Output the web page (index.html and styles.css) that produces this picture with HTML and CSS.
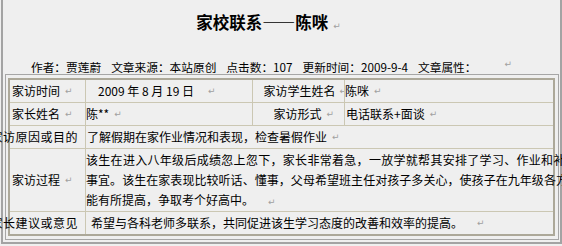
FILE: index.html
```html
<!DOCTYPE html>
<html lang="zh-CN">
<head>
  <meta charset="UTF-8" />
  <title>家校联系——陈咪</title>
  <link rel="stylesheet" href="styles.css">
</head>
<body>

  <div class="frame">
    <div class="head">
      <h1 class="title">家校联系——陈咪<span class="pm">↵</span></h1>
      <p class="meta">
        <span>作者：贾莲蔚</span>
        <span>文章来源：本站原创</span>
        <span>点击数：107</span>
        <span>更新时间：2009-9-4</span>
        <span>文章属性：</span>
        <span class="pm far">↵</span>
      </p>
    </div>

    <div class="box">
      <table class="visit">
        <tr>
          <td class="c1"><div class="cell pl2">家访时间<span class="pm">↵</span></div></td>
          <td class="c2"><div class="cell pl12">2009 年 8 月 19 日<span class="pm wide">↵</span></div></td>
          <td class="c3"><div class="cell end clip">家访学生姓名<span class="pm cut">↵</span></div></td>
          <td class="c4"><div class="cell">陈咪<span class="pm">↵</span></div></td>
        </tr>
        <tr>
          <td><div class="cell pl2">家长姓名<span class="pm">↵</span></div></td>
          <td><div class="cell">陈**<span class="pm">↵</span></div></td>
          <td><div class="cell end pr10">家访形式<span class="pm">↵</span></div></td>
          <td><div class="cell pl1">电话联系+面谈<span class="pm">↵</span></div></td>
        </tr>
        <tr>
          <td><div class="cell end pr7 spread">家访原因或目的</div></td>
          <td colspan="3"><div class="cell pl1">了解假期在家作业情况和表现，检查暑假作业<span class="pm">↵</span></div></td>
        </tr>
        <tr>
          <td><div class="cell tall pl2">家访过程<span class="pm">↵</span></div></td>
          <td colspan="3">
            <div class="cell tall para">
              <span class="line l1">该生在进入八年级后成绩忽上忽下，家长非常着急，一放学就帮其安排了学习、作业和补课</span>
              <span class="line l2">事宜。该生在家表现比较听话、懂事，父母希望班主任对孩子多关心，使孩子在九年级各方面</span>
              <span class="line">能有所提高，争取考个好高中。<span class="pm wide">↵</span></span>
            </div>
          </td>
        </tr>
        <tr>
          <td><div class="cell end pr7 spread">家长建议或意见</div></td>
          <td colspan="3"><div class="cell pl5">希望与各科老师多联系，共同促进该生学习态度的改善和效率的提高。<span class="pm wide">↵</span></div></td>
        </tr>
      </table>
    </div>
  </div>

</body>
</html>
```

FILE: styles.css
```css
* {
  box-sizing: border-box;
}

html, body {
  overflow: hidden;
}

body {
  margin: 0;
  background: #efefef;
  color: #000;
  font-family: "Noto Sans CJK SC", sans-serif;
  font-size: 12px;
}

/* outer page frame */
.frame {
  margin-left: 1px;
  width: 561px;
  height: 244px;
  border: 2px solid #a3a3a3;
  border-top: none;
}

.head {
  padding: 10px 26px 0 0;
  text-align: center;
}

.title {
  margin: 0;
  height: 24px;
  font-size: 16.5px;
  line-height: 24px;
  font-weight: bold;
}

.meta {
  margin: 26px 0 0 6px;
  height: 14px;
  line-height: 14px;
  font-size: 11.7px;
  display: flex;
  justify-content: center;
  gap: 10px;
}

.pm {
  font-family: "DejaVu Sans", sans-serif;
  font-size: 9px;
  line-height: 1;
  font-weight: normal;
  letter-spacing: 0;
  color: #a0a0a0;
  margin-left: 5px;
}

.pm.far {
  margin-left: 18px;
}

.pm.wide {
  margin-left: 14px;
}

.pm.cut {
  margin-left: 4px;
  margin-right: -3px;
}

.box {
  margin: 0 1px 0 2px;
  border: 1px solid #a6a6a6;
  padding: 3px 3px 3px 2px;
}

.visit {
  width: 547px;
  table-layout: fixed;
  border-collapse: separate;
  border-spacing: 0;
  border: 2px solid #aca899;
}

.visit td {
  padding: 0;
  border-right: 1px solid #cbc7b3;
  border-bottom: 1px solid #cbc7b3;
  white-space: nowrap;
  vertical-align: middle;
}

.visit td:last-child {
  border-right: none;
}

.visit tr:last-child td {
  border-bottom: none;
}

.c1 { width: 76px; }
.c2 { width: 167px; }
.c3 { width: 92px; }

.cell {
  height: 22px;
  line-height: 22px;
  display: flex;
  align-items: center;
}

.cell.tall {
  height: 62px;
}

.cell.end {
  justify-content: flex-end;
}

.cell.clip {
  overflow: hidden;
}

.cell.spread {
  letter-spacing: 0.5px;
}

.pl1 { padding-left: 1px; }
.pl2 { padding-left: 2px; }
.pl5 { padding-left: 5px; }
.pl12 { padding-left: 12px; }
.pr7 { padding-right: 7px; }
.pr10 { padding-right: 10px; }

.para {
  flex-direction: column;
  align-items: flex-start;
  justify-content: center;
  line-height: 20px;
}

.line.l1 {
  letter-spacing: 0.3px;
}

.line.l2 {
  letter-spacing: 0.05px;
}
```
